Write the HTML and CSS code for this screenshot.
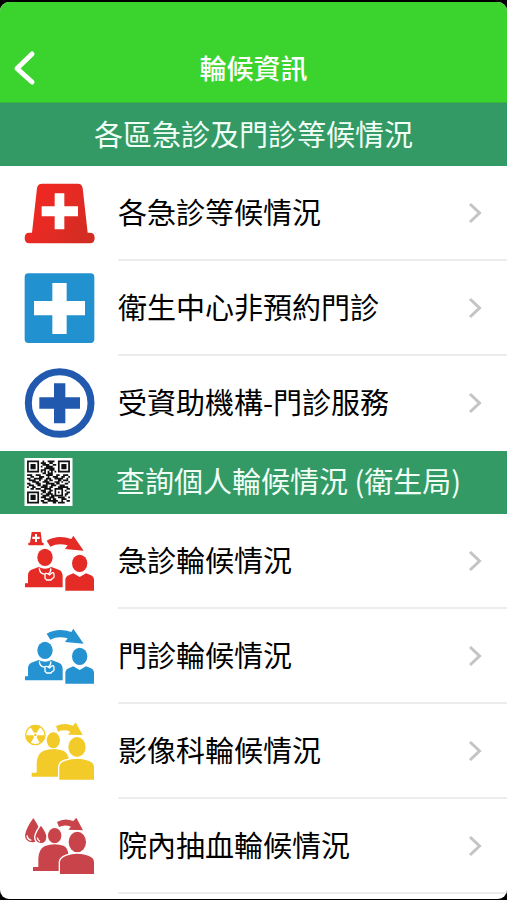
FILE: index.html
```html
<!DOCTYPE html>
<html lang="zh-Hant">
<head>
<meta charset="utf-8">
<meta name="viewport" content="width=device-width, initial-scale=1">
<title>輪候資訊</title>
<link rel="stylesheet" href="styles.css">
</head>
<body>
<div class="screen">
  <header class="bar">
    <button class="back" type="button" aria-label="返回">
      <svg viewBox="0 0 24 36" aria-hidden="true"><path d="M19 4L4 18.500L19 32"/></svg>
    </button>
    <h1 class="bar-title">輪候資訊</h1>
  </header>
  <main>
    <h2 class="section">各區急診及門診等候情況</h2>
    <ul class="list">
      <li><a class="row" href="#">
        <svg class="icon" viewBox="72 24 210 210" aria-hidden="true">
          <defs><linearGradient id="siren" x1="0" y1="0" x2="1" y2="0.600"><stop offset="0" stop-color="#f2261f"/><stop offset="0.500" stop-color="#e92a24"/><stop offset="1" stop-color="#d32c22"/></linearGradient></defs>
          <path fill="url(#siren)" d="M127 41H233Q246 41 248 54L263 188H270Q284 188 284 204T270 220H88Q74 220 74 204T88 188H96L111 54Q113 41 127 41Z"/>
          <path fill="#fff" d="M164 70H193V109H234V139H193V178H164V139H125V109H164Z"/>
        </svg>
        <span class="label">各急診等候情況</span>
        <svg class="chevron" viewBox="0 0 14 22" aria-hidden="true"><path d="M2 2L11.500 11L2 20"/></svg>
      </a></li>
      <li><a class="row" href="#">
        <svg class="icon" viewBox="72 309 210 210" aria-hidden="true">
          <rect x="74" y="310" width="209" height="209" rx="11" fill="#2291d0"/>
          <path fill="#fff" d="M157 339H200V393H255V436H200V492H157V436H102V393H157Z"/>
        </svg>
        <span class="label">衛生中心非預約門診</span>
        <svg class="chevron" viewBox="0 0 14 22" aria-hidden="true"><path d="M2 2L11.500 11L2 20"/></svg>
      </a></li>
      <li><a class="row" href="#">
        <svg class="icon" viewBox="72 594 210 210" aria-hidden="true">
          <circle cx="179" cy="699" r="94" fill="#fff" stroke="#2059ad" stroke-width="21"/>
          <path fill="#2059ad" d="M162 640H196V682H240V716H196V760H162V716H118V682H162Z"/>
        </svg>
        <span class="label">受資助機構-門診服務</span>
        <svg class="chevron" viewBox="0 0 14 22" aria-hidden="true"><path d="M2 2L11.500 11L2 20"/></svg>
      </a></li>
    </ul>
    <div class="section section-code">
      <svg class="code" viewBox="-1.500 -1.500 28 28" role="img" aria-label="QR">
        <path fill="#fff" d="M-1.500-1.500H26.500V26.500H-1.500Z"/>
        <g fill="none" stroke="#111">
          <path d="M.5.5h6v6h-6zM18.500.5h6v6h-6zM.5 18.500h6v6h-6zM16.500 16.500h4v4h-4z"/>
          <path stroke-width="3" d="M2 3.500h3M20 3.500h3M2 21.500h3"/>
          <path d="M9 .5h1M12 .5h4M8 1.500h3M13 1.500h2M9 2.500h4M15 2.500h2M8 3.500h1M11 3.500h4M10 4.500h6M8 5.500h3M13 5.500h3M8 6.500h1M10 6.500h1M12 6.500h1M14 6.500h1M16 6.500h1M9 7.500h2M12 7.500h3M0 8.500h3M5 8.500h3M11 8.500h4M17 8.500h2M21 8.500h3M2 9.500h2M7 9.500h3M12 9.500h1M15 9.500h3M20 9.500h2M24 9.500h1M0 10.500h2M4 10.500h5M11 10.500h3M16 10.500h5M23 10.500h1M1 11.500h4M7 11.500h1M10 11.500h2M13 11.500h2M18 11.500h2M21 11.500h3M3 12.500h4M9 12.500h4M16 12.500h3M20 12.500h1M24 12.500h1M0 13.500h2M5 13.500h3M11 13.500h5M17 13.500h2M22 13.500h2M1 14.500h3M6 14.500h2M9 14.500h3M14 14.500h3M19 14.500h3M0 15.500h1M3 15.500h2M8 15.500h4M13 15.500h2M18 15.500h6M2 16.500h2M5 16.500h3M10 16.500h4M23 16.500h2M8 17.500h3M13 17.500h2M22 17.500h1M9 18.500h2M12 18.500h2M18 18.500h1M23 18.500h2M8 19.500h1M11 19.500h4M22 19.500h2M9 20.500h4M14 20.500h2M22 20.500h1M8 21.500h3M13 21.500h3M18 21.500h4M24 21.500h1M10 22.500h4M15 22.500h2M20 22.500h3M8 23.500h2M12 23.500h6M20 23.500h1M23 23.500h2M9 24.500h3M15 24.500h2M18 24.500h4"/>
        </g>
      </svg>
      <h2 class="section-name">查詢個人輪候情況 (衛生局)</h2>
    </div>
    <ul class="list">
      <li><a class="row" href="#">
        <svg class="icon red" viewBox="42 18 210 210" aria-hidden="true">
          <path d="M65 36H92L96 68H101V76H55V68H60Z"/>
          <path class="cut" d="M75 42H81V50H89V57H81V66H75V57H67V50H75Z"/>
          <path d="M110 62Q144 43 184 57L190 47L221 92L165 87L173 76Q144 68 121 80Z"/>
          <ellipse cx="105" cy="112" rx="23" ry="26"/>
          <path d="M86 141Q105 152 124 141L148 150Q158 155 158 169V202H45V190H54V166Q54 154 64 149Z"/>
          <path class="line" d="M88 145Q88 161 105 163M122 145Q124 155 116 161M105 175V163Q105 158 113 161L119 165L125 159Q132 156 132 164V170Q132 174 127 175L123 180H110Z"/>
          <ellipse cx="209" cy="130" rx="23" ry="26"/>
          <path d="M190 160L209 171L228 160L243 166Q252 170 252 181V212H166V181Q166 170 176 166Z"/>
        </svg>
        <span class="label">急診輪候情況</span>
        <svg class="chevron" viewBox="0 0 14 22" aria-hidden="true"><path d="M2 2L11.500 11L2 20"/></svg>
      </a></li>
      <li><a class="row" href="#">
        <svg class="icon blue" viewBox="42 18 210 210" aria-hidden="true">
          <path d="M110 56Q144 37 184 51L190 41L221 86L165 81L173 70Q144 62 121 74Z"/>
          <ellipse cx="105" cy="106" rx="23" ry="26"/>
          <path d="M86 135Q105 146 124 135L148 144Q158 149 158 163V196H45V184H54V160Q54 148 64 143Z"/>
          <path class="line" d="M88 139Q88 155 105 157M122 139Q124 149 116 155M105 169V157Q105 152 113 155L119 159L125 153Q132 150 132 158V164Q132 168 127 169L123 174H110Z"/>
          <ellipse cx="209" cy="124" rx="23" ry="26"/>
          <path d="M190 154L209 165L228 154L243 160Q252 164 252 175V206H166V175Q166 164 176 160Z"/>
        </svg>
        <span class="label">門診輪候情況</span>
        <svg class="chevron" viewBox="0 0 14 22" aria-hidden="true"><path d="M2 2L11.500 11L2 20"/></svg>
      </a></li>
      <li><a class="row" href="#">
        <svg class="icon yellow" viewBox="42 18 210 210" aria-hidden="true">
          <circle class="ring" cx="76" cy="75" r="29"/>
          <path d="M72 68L60 49Q76 40 92 49L80 68ZM69 76H48Q49 92 62 100L72 82ZM83 76H104Q103 92 90 100L80 82Z"/>
          <circle cx="76" cy="75" r="4"/>
          <path d="M138 48Q163 36 189 47L197 37L218 75L174 74L181 65Q163 57 144 65Z"/>
          <ellipse cx="130" cy="91" rx="20" ry="24"/>
          <path d="M65 188H80V160Q82 129 101 122Q130 112 160 122Q175 130 177 150L145 175V200H65Z"/>
          <ellipse class="halo" cx="201" cy="111" rx="26" ry="30"/>
          <path class="halo" d="M148 209V170Q150 156 167 152Q201 141 235 152Q252 158 252 170V209Z"/>
        </svg>
        <span class="label">影像科輪候情況</span>
        <svg class="chevron" viewBox="0 0 14 22" aria-hidden="true"><path d="M2 2L11.500 11L2 20"/></svg>
      </a></li>
      <li><a class="row" href="#">
        <svg class="icon crimson" viewBox="42 18 210 210" aria-hidden="true">
          <path d="M70 39Q90 69 94 88Q92 112 68 112Q45 111 45 90Q49 68 70 39Z"/>
          <path class="halo" d="M93 62Q109 84 109 95Q108 114 93 114Q76 113 76 96Q78 82 93 62Z"/>
          <path class="line" d="M51 91Q52 103 64 106M82 98Q83 106 90 109"/>
          <path d="M141 51Q163 37 190 48L199 38L219 76L175 74L183 65Q163 57 147 66Z"/>
          <ellipse cx="134" cy="92" rx="20" ry="23"/>
          <path d="M69 186H85V160Q87 130 105 123Q134 113 162 123Q173 130 175 146L147 174V198H69Z"/>
          <ellipse class="halo" cx="202" cy="111" rx="26" ry="31"/>
          <path class="halo" d="M150 207V170Q152 158 169 152Q202 141 235 152Q252 158 252 170V207Z"/>
        </svg>
        <span class="label">院內抽血輪候情況</span>
        <svg class="chevron" viewBox="0 0 14 22" aria-hidden="true"><path d="M2 2L11.500 11L2 20"/></svg>
      </a></li>
    </ul>
  </main>
</div>
</body>
</html>
```
FILE: styles.css
```css
* {
  box-sizing: border-box;
}

body {
  margin: 0;
  padding: 2px 0 1px;
  min-height: 100vh;
  display: flex;
  background: #000;
  font-family: "Noto Sans CJK TC", sans-serif;
  color: #000;
}

.screen {
  flex: 1;
  min-width: 0;
  background: #fff;
  border-radius: 9px;
  overflow: hidden;
}

h1,
h2,
ul {
  margin: 0;
  padding: 0;
}

.bar {
  display: grid;
  grid-template-columns: 48px 1fr 48px;
  align-items: center;
  padding: 48px 0 16px;
  background: #3bd32e;
  border-bottom: 1px solid #36b83f;
}

.back {
  display: flex;
  padding: 0 0 0 13px;
  border: 0;
  background: none;
}

.back svg {
  width: 24px;
  height: 36px;
  fill: none;
  stroke: #fff;
  stroke-width: 5;
  stroke-linecap: round;
  stroke-linejoin: round;
}

.bar-title {
  font-size: 27px;
  line-height: 36px;
  font-weight: 500;
  text-align: center;
  color: #fff;
}

.section {
  padding: 11px 0 13px;
  background: #339a66;
  color: #f2fff6;
  font-size: 29px;
  line-height: 39px;
  font-weight: 400;
  text-align: center;
}

.section-code {
  display: flex;
  align-items: center;
  gap: 43px;
  padding: 7px 24px 8px;
  text-align: left;
}

.section-name {
  padding-bottom: 4px;
  font: inherit;
}

.code {
  width: 49px;
  height: 48px;
}

.list {
  list-style: none;
}

.row {
  display: flex;
  align-items: center;
  height: 95px;
  padding: 0 25px 2px 24px;
  gap: 24px;
  color: inherit;
  text-decoration: none;
  background: linear-gradient(#ececec, #ececec) 118px 100% / 100% 2px no-repeat;
}

.list:first-of-type li:last-child .row {
  background: none;
}

.label {
  flex: 1;
  padding-bottom: 3px;
  font-size: 29px;
  line-height: 40px;
}

.icon {
  width: 70px;
  height: 70px;
  overflow: visible;
}

.red { fill: #e52b26; }
.blue { fill: #2592d1; }
.yellow { fill: #f2cb28; }
.crimson { fill: #c9444a; }

.cut {
  fill: #fff;
}

.line {
  fill: none;
  stroke: #fff;
  stroke-width: 4;
}

.halo {
  stroke: #fff;
  stroke-width: 8;
  paint-order: stroke;
}

.ring {
  fill: none;
  stroke: #f2cb28;
  stroke-width: 4;
}

.chevron {
  width: 14px;
  height: 22px;
  fill: none;
  stroke: #c4c4c6;
  stroke-width: 3;
}
```
